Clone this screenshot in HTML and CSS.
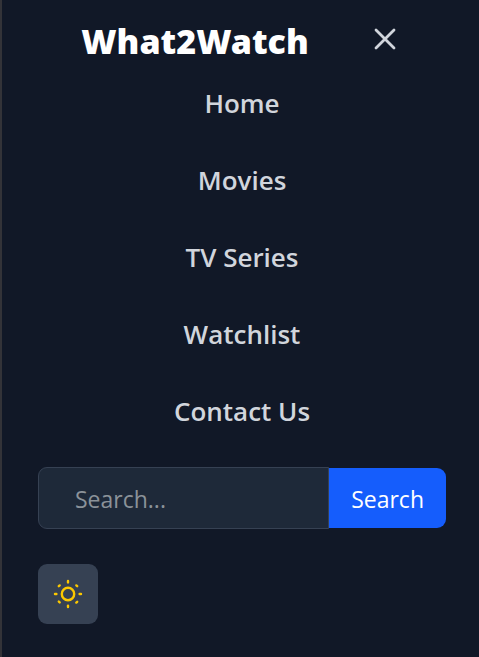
FILE: index.html
```html
<!DOCTYPE html>
<html lang="en">
<head>
<meta charset="utf-8">
<meta name="viewport" content="width=device-width, initial-scale=1">
<title>What2Watch</title>
<link rel="stylesheet" href="styles.css">
</head>
<body>
<div class="menu">
  <header class="menu-header">
    <a class="brand" href="#">What2Watch</a>
    <button class="close" type="button" aria-label="Close menu">
      <svg viewBox="0 0 24 24" width="24" height="24" fill="none" stroke="currentColor" stroke-width="2.800" stroke-linecap="round"><path d="M3 3 21 21M21 3 3 21"/></svg>
    </button>
  </header>
  <nav class="links">
    <a href="#">Home</a>
    <a href="#">Movies</a>
    <a href="#">TV Series</a>
    <a href="#">Watchlist</a>
    <a href="#">Contact Us</a>
  </nav>
  <form class="search">
    <input class="search-input" type="search" placeholder="Search..." aria-label="Search">
    <button class="search-button" type="submit">Search</button>
  </form>
  <button class="theme" type="button" aria-label="Switch theme">
    <svg viewBox="0 0 30 30" width="30" height="30" fill="none" stroke="currentColor" stroke-width="2.400" stroke-linecap="round"><circle cx="15" cy="15" r="6.200"/><path d="M15 2v1.400M15 26.600V28M2 15h1.400M26.600 15H28M5.800 7.200l.9-.8M23.300 6.400l.9.800M5.800 22.600l.9.800M23.300 23.600l.9-.8"/></svg>
  </button>
</div>
</body>
</html>
```
FILE: styles.css
```css
* {
  box-sizing: border-box;
}

body {
  margin: 0;
  background: #111827;
  color: #d1d5dc;
  font-family: "Open Sans", "Noto Sans", sans-serif;
}

a {
  color: inherit;
  text-decoration: none;
}

button,
input {
  margin: 0;
  font: inherit;
}

.menu {
  min-height: 100vh;
  padding: 17px 33px 32px 36px;
  border-left: 2px solid #333338;
}

.menu-header {
  display: flex;
  align-items: center;
  justify-content: center;
  gap: 64px;
  height: 48px;
  padding-right: 6px;
}

.brand {
  color: #fff;
  font-family: "Noto Sans", sans-serif;
  font-size: 34px;
  font-weight: 900;
  line-height: 48px;
}

.close {
  display: flex;
  padding: 0 0 4px;
  border: 0;
  background: none;
  color: #d1d5dc;
}

.links {
  display: flex;
  flex-direction: column;
  align-items: center;
  gap: 36px;
  padding-top: 18px;
  font-size: 26px;
  font-weight: 600;
  line-height: 41px;
}

.search {
  display: flex;
  align-items: center;
  margin-top: 35px;
  font-size: 23px;
}

.search-input {
  flex: 1;
  min-width: 0;
  height: 62px;
  padding: 2px 36px 0;
  border: 1px solid #364153;
  border-radius: 9px 0 0 9px;
  outline: 0;
  background: #1e2939;
  color: #fff;
  appearance: none;
}

.search-input::placeholder {
  color: #8b9299;
}

.search-button {
  height: 60px;
  padding: 2px 22px 0;
  border: 0;
  border-radius: 0 9px 9px 0;
  background: #155dfc;
  color: #fff;
}

.theme {
  display: flex;
  align-items: center;
  justify-content: center;
  width: 60px;
  height: 60px;
  margin-top: 35px;
  padding: 0;
  border: 0;
  border-radius: 9px;
  background: #364153;
  color: #fcc800;
}
```
